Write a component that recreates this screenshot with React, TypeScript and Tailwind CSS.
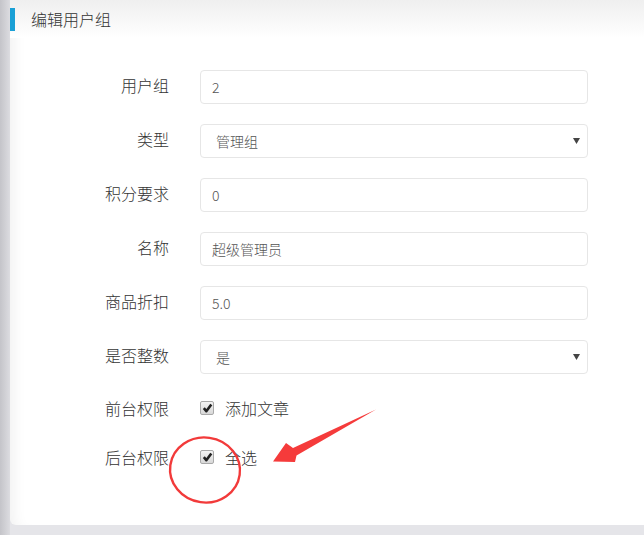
import React from 'react';

const font = { fontFamily: '"Noto Sans CJK SC", "Noto Sans", sans-serif' };

const TextRow: React.FC<{ label: string; value: string }> = ({ label, value }) => (
  <div className="flex items-center h-[34px]">
    <div className="w-[159px] text-right text-[16px] font-light text-[#333] leading-none mb-[4px]">{label}</div>
    <div className="ml-[31px] w-[388px] h-[34px] border border-[#e6e6e6] rounded-[4px] flex items-center pl-[11px] text-[14px] font-light text-[#555]">
      {value}
    </div>
  </div>
);

const SelectRow: React.FC<{ label: string; value: string }> = ({ label, value }) => (
  <div className="flex items-center h-[34px]">
    <div className="w-[159px] text-right text-[16px] font-light text-[#333] leading-none mb-[4px]">{label}</div>
    <div className="ml-[31px] w-[388px] h-[34px] border border-[#e6e6e6] rounded-[4px] flex items-center justify-between pl-[15px] pr-[7px] text-[14px] font-light text-[#555]">
      <span>{value}</span>
      <svg width="7" height="6" viewBox="0 0 7 6">
        <path d="M0 0 H7 L3.5 6 Z" fill="#444" />
      </svg>
    </div>
  </div>
);

const Check: React.FC = () => (
  <span className="w-[14px] h-[14px] border border-[#a9a9a9] rounded-[2px] bg-gradient-to-b from-[#f4f4f4] to-[#d8d8d8] flex items-center justify-center">
    <svg width="11" height="10" viewBox="0 0 11 10">
      <path d="M1.8 5.2 L4.3 8.2 L9.3 1.4" fill="none" stroke="#222" strokeWidth="2.6" strokeLinejoin="round" />
    </svg>
  </span>
);

const CheckRow: React.FC<{ label: string; text: string }> = ({ label, text }) => (
  <div className="flex items-center h-[24px]">
    <div className="w-[159px] text-right text-[16px] font-light text-[#333] leading-none">{label}</div>
    <div className="ml-[31px] flex items-center">
      <Check />
      <span className="ml-[11px] text-[16px] font-light text-[#333] leading-none">{text}</span>
    </div>
  </div>
);

export default function App() {
  return (
    <div className="relative w-[644px] h-[535px] bg-[#e5e5e9] flex overflow-hidden" style={font}>
      <div className="w-[10px] h-full bg-gradient-to-r from-[#c4c4c9] to-[#dcdce0]" />
      <div className="flex-1 h-[525px] bg-white rounded-bl-[6px] flex flex-col shadow-[inset_14px_0_14px_-10px_rgba(0,0,0,0.06)]">
        <div className="h-[38px] bg-gradient-to-b from-[#efefef] to-white flex items-center">
          <div className="w-[5px] h-[23px] bg-[#1aa0d6] self-start mt-[8px]" />
          <div className="ml-[16px] text-[16px] font-light text-[#333] leading-none">编辑用户组</div>
        </div>
        <div className="flex flex-col gap-[20px] pt-[32px]">
          <TextRow label="用户组" value="2" />
          <SelectRow label="类型" value="管理组" />
          <TextRow label="积分要求" value="0" />
          <TextRow label="名称" value="超级管理员" />
          <TextRow label="商品折扣" value="5.0" />
          <SelectRow label="是否整数" value="是" />
        </div>
        <div className="flex flex-col gap-[25px] mt-[22px]">
          <CheckRow label="前台权限" text="添加文章" />
          <CheckRow label="后台权限" text="全选" />
        </div>
      </div>
      <svg className="absolute left-0 top-0 pointer-events-none" width="644" height="535">
        <ellipse cx="205" cy="470" rx="35" ry="32.5" fill="none" stroke="#f23a3a" strokeWidth="2.4" transform="rotate(8 205 470)" />
        <path d="M376 409.5 L293 448 L286 443 L273 461.5 L295 462 L296.5 455.5 Z" fill="#f53b3b" />
      </svg>
    </div>
  );
}
